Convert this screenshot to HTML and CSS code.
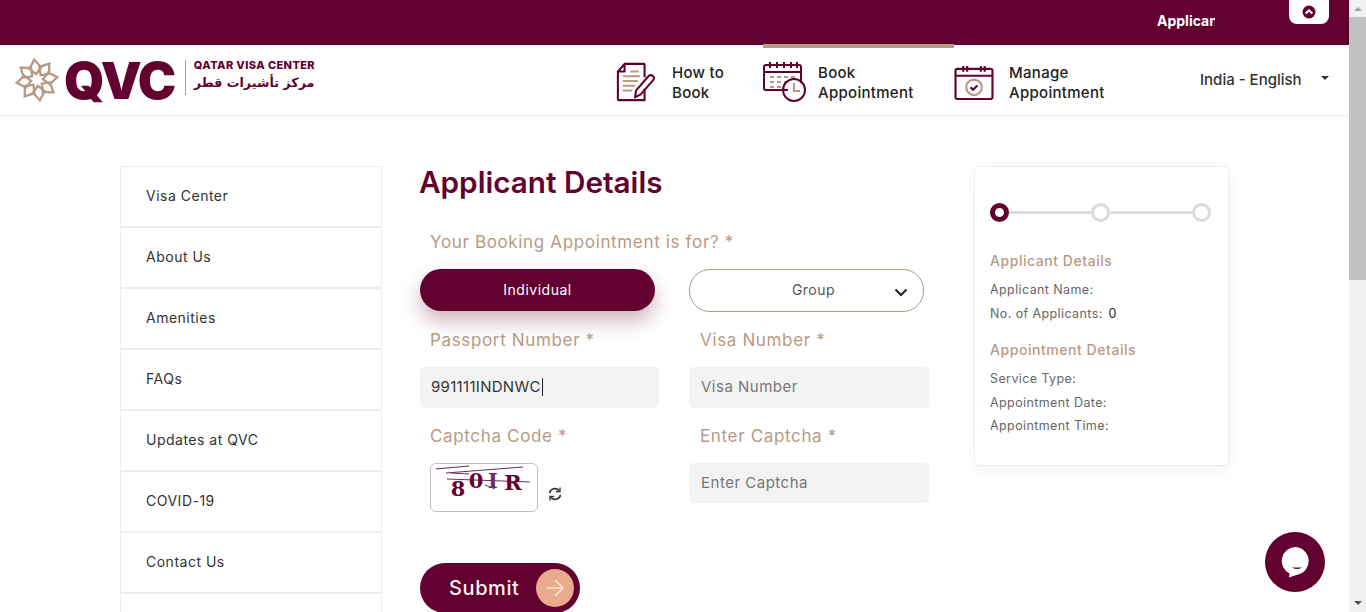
FILE: index.html
```html
<!DOCTYPE html>
<html>
<head>
    <title>Applicant Details</title>
    <link rel="stylesheet" href="styles.css">
</head>
<body>
    <div class="page">
        <div class="topbar">
            <div class="ticker">Applicant Details</div>
            <div class="collapse">
                <svg width="14" height="14" viewBox="0 0 14 14"><circle cx="7" cy="7" r="6.5" fill="#62012f"/><path d="M3.6 8.6 7 5.4l3.4 3.2" fill="none" stroke="#fff" stroke-width="2"/></svg>
            </div>
        </div>

        <header class="header">
            <div class="logo">
                <svg class="logoStar" width="44" height="44" viewBox="-22 -22 44 44">
                    <g fill="none" stroke="#b79a85" stroke-width="2.3" transform="rotate(-8)">
                        <g id="petal"><path d="M0-20.500 6-12 0-6-6-12Z"/></g>
                        <use href="#petal" transform="rotate(45)"/>
                        <use href="#petal" transform="rotate(90)"/>
                        <use href="#petal" transform="rotate(135)"/>
                        <use href="#petal" transform="rotate(180)"/>
                        <use href="#petal" transform="rotate(225)"/>
                        <use href="#petal" transform="rotate(270)"/>
                        <use href="#petal" transform="rotate(315)"/>
                    </g>
                </svg>
                <span class="logoMark">QVC</span>
                <div class="logoText">
                    <span class="logoEn">QATAR VISA CENTER</span>
                    <span class="logoAr" lang="ar" dir="rtl">مركز تأشيرات قطر</span>
                </div>
            </div>

            <nav class="nav">
                <a class="navItem navHow">
                    <svg width="40" height="40" viewBox="0 0 42 42" fill="none" stroke="#62012f" stroke-width="2.200" stroke-linejoin="round">
                        <path d="M9 2h20a1 1 0 0 1 1 1v13M2 10v29a1 1 0 0 0 1 1h27V28M9 2 2 10h7Z"/>
                        <path d="M7 15h18M7 20h16M7 25h13M7 30h10M15 10h9" stroke="#b79a85"/>
                        <path d="m20 37 1-7 13-15a3 3 0 0 1 5 4L26 34Z"/>
                    </svg>
                    <span>How to<br>Book</span>
                </a>
                <a class="navItem navBook">
                    <svg width="44" height="42" viewBox="0 0 44 42" fill="none" stroke="#62012f" stroke-width="2">
                        <path d="M25 29H3a2 2 0 0 1-2-2V6a2 2 0 0 1 2-2h33a2 2 0 0 1 2 2v16M1 11h37M7 1v6M14 1v6M21 1v6M28 1v6M34 1v6"/>
                        <path d="M7 16h4M14 16h4M21 16h4M28 16h4M7 21h4M14 21h4M21 21h3M7 26h4M14 26h4" stroke="#b79a85"/>
                        <circle cx="31" cy="29" r="11"/>
                        <path d="M31 22v8h6" stroke="#b79a85"/>
                    </svg>
                    <span>Book<br>Appointment</span>
                </a>
                <a class="navItem navManage">
                    <svg width="40" height="35" viewBox="0 0 40 36" fill="none" stroke="#62012f" stroke-width="2.200">
                        <rect x="1" y="4" width="38" height="31" rx="2"/>
                        <path d="M1 11h38M9 1v6M13 1v6M27 1v6M31 1v6"/>
                        <circle cx="20" cy="23" r="8" stroke="#b79a85"/>
                        <path d="m16.500 23 2.500 2.500 4.500-4.500"/>
                    </svg>
                    <span>Manage<br>Appointment</span>
                </a>
            </nav>

            <div class="lang">India - English<span class="caret"></span></div>
        </header>

        <main class="content">
            <ul class="sideMenu">
                <li>Visa Center</li>
                <li>About Us</li>
                <li>Amenities</li>
                <li>FAQs</li>
                <li>Updates at QVC</li>
                <li>COVID-19</li>
                <li>Contact Us</li>
                <li></li>
            </ul>

            <section class="form">
                <h1>Applicant Details</h1>
                <label class="label bookingLabel">Your Booking Appointment is for? *</label>
                <div class="row choiceRow">
                    <button class="choice active">Individual</button>
                    <button class="choice group">Group
                        <svg class="chevron" width="14" height="9" viewBox="0 0 14 9"><path d="M1.500 1.500 7 7l5.500-5.500" fill="none" stroke="#222" stroke-width="2"/></svg>
                    </button>
                </div>
                <div class="row labelRow">
                    <label class="label">Passport Number *</label>
                    <label class="label">Visa Number *</label>
                </div>
                <div class="row">
                    <div class="input filled">991111INDNWC<span class="cursor"></span></div>
                    <div class="input wide">Visa Number</div>
                </div>
                <div class="row labelRow captchaLabels">
                    <label class="label">Captcha Code *</label>
                    <label class="label">Enter Captcha *</label>
                </div>
                <div class="row captchaRow">
                    <div class="captchaWrap">
                        <div class="captcha">
                            <svg width="106" height="47" viewBox="0 0 106 47">
                                <g fill="none" stroke="#6b2a68" stroke-width="1">
                                    <path d="M5 5 38 2M15 9 92 3M16 15 99 18M20 9 38 10M54 21 64 25"/>
                                </g>
                                <g class="captchaGlyphs">
                                    <text x="27" y="32" text-anchor="middle">8</text>
                                    <text x="45" y="24" text-anchor="middle">0</text>
                                    <text class="faint" x="62" y="24" text-anchor="middle">I</text>
                                    <text x="82" y="26" text-anchor="middle">R</text>
                                </g>
                            </svg>
                        </div>
                        <svg class="refresh" width="14" height="14" viewBox="0 0 14 14" fill="none" stroke="#333" stroke-width="1.600">
                            <path d="M1.500 6A5.500 5.500 0 0 1 11 3.500M12.500 8A5.500 5.500 0 0 1 3 10.500"/>
                            <path d="M12 .5v4H8M2 13.500v-4h4" stroke-width="1.400"/>
                        </svg>
                    </div>
                    <div class="input wide short">Enter Captcha</div>
                </div>
                <button class="submit">Submit
                    <span class="submitArrow">
                        <svg width="20" height="18" viewBox="0 0 20 18"><path d="M1 9h17M10 1l8 8-8 8" fill="none" stroke="#f6e4da" stroke-width="1.600"/></svg>
                    </span>
                </button>
            </section>

            <aside class="summary">
                <div class="steps">
                    <span class="step current"></span>
                    <span class="stepLine"></span>
                    <span class="step"></span>
                    <span class="stepLine"></span>
                    <span class="step"></span>
                </div>
                <h3>Applicant Details</h3>
                <p>Applicant Name:</p>
                <p>No. of Applicants: <b>0</b></p>
                <h3 class="second">Appointment Details</h3>
                <p>Service Type:</p>
                <p>Appointment Date:</p>
                <p>Appointment Time:</p>
            </aside>
        </main>

        <div class="chat">
            <svg width="30" height="32" viewBox="0 0 30 32">
                <path d="M15 1a14 14 0 0 1 3 27.600Q13 30 9 31.500l.5-4A14 14 0 0 1 15 1Z" fill="#fff"/>
                <path d="M12 21.500q5 3 10 0Z" fill="#62012f"/>
            </svg>
        </div>
    </div>

    <div class="scrollbar">
        <span class="arrowUp"></span>
        <span class="thumb"></span>
        <span class="arrowDown"></span>
    </div>
</body>
</html>
```
FILE: styles.css
```css
* {
    box-sizing: border-box;
}

html, body {
    height: 100%;
}

body {
    display: flex;
    margin: 0;
    overflow: hidden;
    font-family: "Inter", "Liberation Sans", sans-serif;
    color: #333;
    background-color: #fff;
}

.page {
    position: relative;
    flex: 1;
    min-width: 0;
    height: 612px;
    overflow: hidden;
}

/* top bar */
.topbar {
    display: flex;
    justify-content: flex-end;
    height: 45px;
    padding-right: 20px;
    background-color: #62012f;
}

.ticker {
    width: 58px;
    margin: 12px 74px 0 0;
    overflow: hidden;
    white-space: nowrap;
    color: #fff;
    font-size: 14px;
    font-weight: 700;
    line-height: 17px;
}

.collapse {
    display: flex;
    align-items: center;
    justify-content: center;
    width: 40px;
    height: 24px;
    background-color: #fff;
    border-radius: 0 0 8px 8px;
}

/* header */
.header {
    display: flex;
    align-items: stretch;
    height: 71px;
    padding-left: 15px;
    border-bottom: 1px solid #eeeeee;
}

.logo {
    display: flex;
    align-items: center;
    width: 601px;
    padding-bottom: 1px;
}

.logoStar {
    flex: none;
}

.logoMark {
    margin: 0 10px 0 5px;
    color: #62012f;
    font-size: 51.500px;
    font-weight: 900;
    letter-spacing: -1.5px;
    line-height: 50px;
}

.logoText {
    display: flex;
    flex-direction: column;
    align-self: flex-start;
    height: 35px;
    margin-top: 15px;
    padding-left: 8px;
    border-left: 1px solid #b79a85;
    color: #62012f;
}

.logoEn {
    font-size: 11px;
    font-weight: 800;
    letter-spacing: 0.4px;
    line-height: 11px;
    white-space: nowrap;
}

.logoAr {
    font-family: "DejaVu Sans", sans-serif;
    font-size: 12.700px;
    font-weight: 700;
    line-height: 24px;
    text-align: left;
}

.nav {
    display: flex;
}

.navItem {
    display: flex;
    align-items: center;
    gap: 16px;
    padding-top: 1px;
    font-size: 15px;
    font-weight: 500;
    letter-spacing: 0.3px;
    line-height: 20px;
    color: #222;
    border-top: 4px solid transparent;
    margin-top: -1px;
}

.navItem span {
    margin-top: 2px;
}

.navHow {
    width: 147px;
}

.navBook {
    width: 191px;
    gap: 11px;
    border-top-color: #b79a85;
}

.navManage {
    width: 246px;
    gap: 15px;
}

.lang {
    display: flex;
    align-items: center;
    width: 135px;
    padding-bottom: 1px;
    font-size: 15px;
    font-weight: 500;
    color: #333;
    white-space: nowrap;
}

.caret {
    width: 0;
    height: 0;
    margin: -3px 0 0 19px;
    border-top: 4px solid #333;
    border-left: 4px solid transparent;
    border-right: 4px solid transparent;
}

/* main */
.content {
    display: flex;
    align-items: flex-start;
    padding: 50px 0 0 120px;
}

.sideMenu {
    flex: none;
    width: 262px;
    margin: 0;
    padding: 0;
    list-style: none;
    border-left: 1px solid #eeeeee;
    border-right: 1px solid #eeeeee;
    border-top: 1px solid #eeeeee;
}

.sideMenu li {
    height: 61px;
    padding-left: 25px;
    border-bottom: 2px solid #eeeeee;
    font-size: 14px;
    letter-spacing: 0.5px;
    line-height: 58px;
    color: #333;
}

.form {
    flex: none;
    width: 510px;
    margin-left: 38px;
}

.form h1 {
    margin: 0 0 0 -1px;
    color: #62012f;
    font-size: 29.700px;
    font-weight: 600;
    line-height: 32px;
}

.label {
    display: block;
    padding-left: 10px;
    color: #b79a85;
    font-size: 17px;
    font-weight: 400;
    letter-spacing: 0.65px;
    line-height: 22px;
}

.bookingLabel {
    margin-top: 33px;
}

.row {
    display: flex;
    gap: 30px;
}

.row > * {
    width: 239px;
}

.row > .wide {
    width: 240px;
}

.choiceRow {
    gap: 34px;
    margin-top: 16px;
}

.choice {
    width: 235px;
    height: 42px;
    padding-bottom: 2px;
    font-family: inherit;
    font-size: 14px;
    letter-spacing: 0.5px;
    border-radius: 21px;
}

.choice.active {
    color: #fff;
    background-color: #62012f;
    border: none;
    box-shadow: 0 10px 20px rgba(98, 1, 47, 0.3);
}

.choice.group {
    position: relative;
    width: 235px;
    height: 43px;
    padding: 0 0 3px 14px;
    color: #555;
    background-color: #fff;
    border: 1px solid #b79a85;
}

.chevron {
    position: absolute;
    top: 18px;
    right: 15px;
}

.labelRow {
    gap: 31px;
    margin-top: 17px;
}

.labelRow + .row {
    margin-top: 16px;
}

.captchaLabels {
    margin-top: 17px;
}

.input {
    height: 41px;
    padding-left: 12px;
    background-color: #f3f3f3;
    border-radius: 5px;
    color: #777;
    font-size: 15px;
    letter-spacing: 0.5px;
    line-height: 40px;
}

.input.short {
    height: 40px;
}

.input.filled {
    padding-left: 11px;
    color: #333;
    letter-spacing: 0.3px;
}

.cursor {
    display: inline-block;
    width: 1px;
    height: 18px;
    margin-left: 1px;
    vertical-align: -4px;
    background-color: #222;
}

.captchaRow {
    align-items: flex-start;
}

.captchaWrap {
    display: flex;
    align-items: flex-start;
    padding-left: 10px;
}

.captcha {
    width: 108px;
    height: 49px;
    border: 1px solid #c4bfc2;
    border-radius: 6px;
    background-color: #fff;
}

.captchaGlyphs text {
    fill: #62012f;
    font-family: "DejaVu Serif", serif;
    font-size: 21px;
    font-weight: 700;
}

.captchaGlyphs text.faint {
    fill: #6b2a68;
}

.refresh {
    margin: 24px 0 0 10px;
}

.submit {
    display: flex;
    align-items: center;
    justify-content: space-between;
    width: 160px;
    height: 50px;
    margin-top: 51px;
    padding: 0 6px 0 29px;
    color: #f7eef0;
    background-color: #62012f;
    border: none;
    border-radius: 25px;
    font-family: inherit;
    font-size: 20px;
    font-weight: 500;
    letter-spacing: 0.6px;
}

.submitArrow {
    display: flex;
    align-items: center;
    justify-content: center;
    width: 38px;
    height: 38px;
    background-color: #eaab8c;
    border-radius: 50%;
}

.summary {
    flex: none;
    width: 255px;
    height: 300px;
    margin-left: 44px;
    padding: 36px 17px 0 15px;
    background-color: #fff;
    border: 1px solid #f0edf3;
    border-radius: 5px;
    box-shadow: 0 4px 14px rgba(60, 40, 90, 0.06);
}

.steps {
    display: flex;
    align-items: center;
    margin-bottom: 29px;
}

.step {
    flex: none;
    width: 19px;
    height: 19px;
    border: 3px solid #dcdcdc;
    border-radius: 50%;
    background-color: #fff;
}

.step.current {
    border: 5px solid #62012f;
}

.stepLine {
    flex: 1;
    height: 3px;
    background-color: #dcdcdc;
}

.summary h3 {
    margin: 0 0 7px;
    color: #b79a85;
    font-size: 14px;
    font-weight: 500;
    letter-spacing: 0.55px;
    line-height: 20px;
}

.summary h3.second {
    margin-top: 15px;
}

.summary p {
    margin: 0;
    color: #666;
    font-size: 12.500px;
    letter-spacing: 0.4px;
    line-height: 23.500px;
}

.summary b {
    margin-left: 2px;
    color: #222;
    font-weight: 400;
}

.chat {
    position: absolute;
    top: 532px;
    left: 1265px;
    display: flex;
    align-items: center;
    justify-content: center;
    width: 60px;
    height: 60px;
    background-color: #62012f;
    border-radius: 50%;
}

/* window scrollbar */
.scrollbar {
    display: flex;
    flex: none;
    flex-direction: column;
    align-items: center;
    width: 17px;
    height: 612px;
    background-color: #f1f1f1;
}

.arrowUp {
    width: 0;
    height: 0;
    margin-top: 7px;
    border-bottom: 4px solid #a3a3a3;
    border-left: 4px solid transparent;
    border-right: 4px solid transparent;
}

.thumb {
    width: 100%;
    height: 263px;
    margin-top: 6px;
    background-color: #c1c1c1;
}

.arrowDown {
    width: 0;
    height: 0;
    margin-top: auto;
    margin-bottom: 7px;
    border-top: 4px solid #505050;
    border-left: 4px solid transparent;
    border-right: 4px solid transparent;
}
```
